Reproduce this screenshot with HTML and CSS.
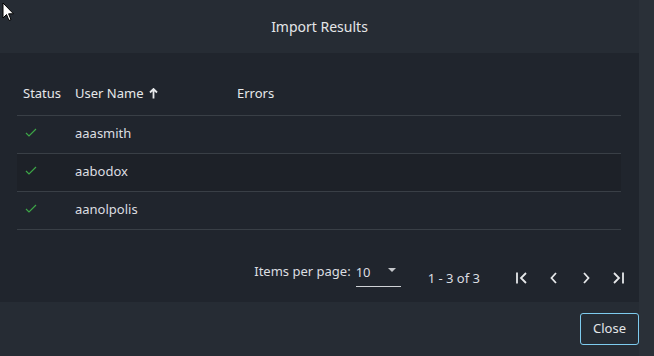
FILE: index.html
```html
<!DOCTYPE html>
<html lang="en">
<head>
    <meta charset="UTF-8">
    <meta name="viewport" content="width=device-width, initial-scale=1.0">
    <title>Import Results</title>
    <link rel="stylesheet" href="styles.css">
</head>
<body>
    <div class="dialog">
        <div class="dialog-main">
            <h2 class="dialog-title">Import Results</h2>

            <div class="panel">
                <table class="results">
                    <thead>
                        <tr>
                            <th class="col-status">Status</th>
                            <th class="col-user">User Name
                                <svg class="sort-arrow" width="9" height="11" viewBox="0 0 9 11">
                                    <path d="M4.5 1 L4.5 10.5 M1 4.5 L4.5 1 L8 4.5" fill="none" stroke="#e6e8ea" stroke-width="1.8"/>
                                </svg>
                            </th>
                            <th>Errors</th>
                        </tr>
                    </thead>
                    <tbody>
                        <tr>
                            <td class="col-status"><svg class="check" width="12" height="9" viewBox="0 0 12 9"><path d="M1 5 L4 8 L11 1" fill="none" stroke="#3da647" stroke-width="1.2"/></svg></td>
                            <td>aaasmith</td>
                            <td></td>
                        </tr>
                        <tr class="hovered">
                            <td class="col-status"><svg class="check" width="12" height="9" viewBox="0 0 12 9"><path d="M1 5 L4 8 L11 1" fill="none" stroke="#3da647" stroke-width="1.2"/></svg></td>
                            <td>aabodox</td>
                            <td></td>
                        </tr>
                        <tr>
                            <td class="col-status"><svg class="check" width="12" height="9" viewBox="0 0 12 9"><path d="M1 5 L4 8 L11 1" fill="none" stroke="#3da647" stroke-width="1.2"/></svg></td>
                            <td>aanolpolis</td>
                            <td></td>
                        </tr>
                    </tbody>
                </table>

                <div class="paginator">
                    <div class="page-size">
                        <span class="page-size-label">Items per page:</span>
                        <div class="page-select">
                            <span>10</span>
                            <span class="select-arrow"></span>
                        </div>
                    </div>
                    <span class="range">1 - 3 of 3</span>
                    <div class="page-buttons">
                        <button class="icon-btn"><svg width="14" height="14" viewBox="0 0 14 14"><path d="M2 1.5 V12.5 M11 2 L6 7 L11 12" fill="none" stroke="#e6e8ea" stroke-width="1.8"/></svg></button>
                        <button class="icon-btn"><svg width="14" height="14" viewBox="0 0 14 14"><path d="M9 2 L4.5 7 L9 12" fill="none" stroke="#e6e8ea" stroke-width="1.8"/></svg></button>
                        <button class="icon-btn"><svg width="14" height="14" viewBox="0 0 14 14"><path d="M5 2 L9.5 7 L5 12" fill="none" stroke="#e6e8ea" stroke-width="1.8"/></svg></button>
                        <button class="icon-btn"><svg width="14" height="14" viewBox="0 0 14 14"><path d="M3 2 L8 7 L3 12 M12 1.5 V12.5" fill="none" stroke="#e6e8ea" stroke-width="1.8"/></svg></button>
                    </div>
                </div>
            </div>

            <div class="dialog-actions">
                <button class="close-btn">Close</button>
            </div>
        </div>
        <div class="scroll-strip"></div>
    </div>

    <svg class="cursor" width="13" height="20" viewBox="0 0 13 20">
        <path d="M1 1 L1 16 L4.5 12.5 L7 18.5 L9 17.6 L6.6 11.8 L11.5 11.8 Z" fill="#fff" stroke="#000" stroke-width="1"/>
    </svg>
</body>
</html>
```

FILE: styles.css
```css
html, body {
    margin: 0;
    padding: 0;
}

body {
    font-family: "Noto Sans", "Open Sans", sans-serif;
    font-size: 13px;
    color: #dcdee1;
    background-color: #262c34;
    width: 654px;
    height: 356px;
    overflow: hidden;
}

.dialog {
    display: flex;
    height: 356px;
}

.dialog-main {
    width: 639px;
    display: flex;
    flex-direction: column;
}

.scroll-strip {
    width: 15px;
    background-color: #2a3038;
}

.dialog-title {
    margin: 0;
    height: 53px;
    line-height: 54px;
    text-align: center;
    font-size: 14px;
    font-weight: normal;
    color: #e4e6e8;
}

.panel {
    background-color: #20252d;
    padding: 20px 18px 0 17px;
    height: 229px;
}

.results {
    width: 100%;
    border-collapse: collapse;
}

.results th {
    text-align: left;
    font-weight: normal;
    height: 39px;
    padding: 0 0 3px 0;
    border-bottom: 1px solid #393f46;
    color: #e6e8ea;
}

.results td {
    height: 33px;
    padding: 0 0 4px 0;
    border-bottom: 1px solid #393f46;
}

.results tr.hovered td {
    background-color: #1d2128;
}

.results .col-status {
    width: 52px;
    padding-left: 6px;
}

.results .col-user {
    width: 162px;
}

.check {
    display: block;
    margin-left: 2px;
}

.sort-arrow {
    vertical-align: -1px;
    margin-left: 2px;
}

.paginator {
    display: flex;
    align-items: center;
    justify-content: flex-end;
    height: 52px;
    margin-top: 22px;
    margin-right: -11px;
}

.page-size {
    display: flex;
    align-items: center;
    margin-top: -14px;
}

.page-size-label {
    margin-right: 5px;
}

.page-select {
    width: 45px;
    height: 20px;
    border-bottom: 1px solid #cfd2d6;
    display: flex;
    align-items: center;
    justify-content: space-between;
    position: relative;
    top: 5px;
}

.page-select span:first-child {
    position: relative;
    top: -4px;
}

.select-arrow {
    width: 0;
    height: 0;
    border-left: 4px solid transparent;
    border-right: 4px solid transparent;
    border-top: 4px solid #c4c7cb;
    margin-right: 5px;
    position: relative;
    top: -6px;
}

.range {
    margin-left: 27px;
    margin-right: 28px;
}

.page-buttons {
    display: flex;
    gap: 4px;
}

.icon-btn {
    width: 28px;
    height: 28px;
    padding: 0;
    border: none;
    background: none;
    display: flex;
    align-items: center;
    justify-content: center;
    cursor: pointer;
}

.dialog-actions {
    display: flex;
    justify-content: flex-end;
    padding-top: 11px;
}

.close-btn {
    font-family: "Noto Sans", "Open Sans", sans-serif;
    font-size: 13px;
    color: #e4e6e8;
    background-color: transparent;
    border: 1px solid #7ecbee;
    border-radius: 3px;
    width: 59px;
    height: 32px;
    padding: 0 0 2px 0;
    cursor: pointer;
}

.cursor {
    position: absolute;
    left: 2px;
    top: 2px;
}
```
